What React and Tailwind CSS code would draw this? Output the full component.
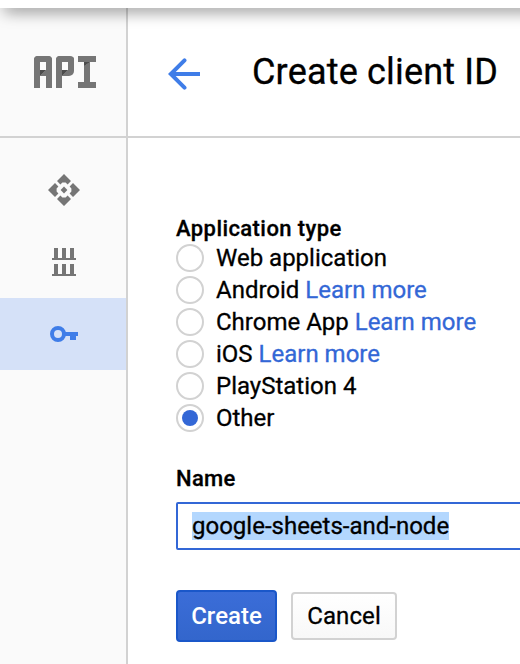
const TYPES = [
  { label: 'Web application' },
  { label: 'Android', link: true },
  { label: 'Chrome App', link: true },
  { label: 'iOS', link: true },
  { label: 'PlayStation 4' },
  { label: 'Other', checked: true },
];

function ApiLogo() {
  return (
    <div role="img" aria-label="API" className="flex h-8 w-[62px] gap-1">
      <div className="h-8 w-[18px] rounded-t-[4px] border-x-[6px] border-t-[6px] border-[#757575]">
        <div className="mt-2 h-1.5 bg-[linear-gradient(135deg,#4c4c4c_45%,#757575_50%)]" />
      </div>
      <div className="h-8 w-[18px]">
        <div className="h-5 w-[18px] rounded-t-[4px] rounded-br-[5px] border-x-[6px] border-t-[6px] border-[#757575]">
          <div className="mt-2 h-1.5 bg-[linear-gradient(135deg,#4c4c4c_45%,#757575_50%)]" />
        </div>
        <div className="h-3 w-1.5 bg-[#757575]" />
      </div>
      <div className="flex h-8 w-[18px] flex-col items-center border-y-[6px] border-[#757575]">
        <div className="w-1.5 grow bg-[#757575]">
          <div className="h-1 bg-[linear-gradient(to_bottom_right,#4c4c4c_45%,#757575_50%)]" />
        </div>
      </div>
    </div>
  );
}

function Sidebar() {
  return (
    <aside className="flex w-32 shrink-0 flex-col border-r-2 border-[#d2d2d2] bg-[#fafafa]">
      <div className="flex h-[130px] shrink-0 items-center border-b-2 border-[#d2d2d2] pl-[34px]">
        <ApiLogo />
      </div>
      <nav className="flex flex-col pt-4">
        <a className="flex h-[72px] items-center justify-center pl-0.5">
          <svg width="32" height="32" viewBox="-16 -16 32 32" fill="#757575">
            <path d="M0-3.4L3.4 0L0 3.4L-3.4 0Z" />
            {[0, 90, 180, 270].map((a) => (
              <path key={a} transform={`rotate(${a})`} d="M0-16L7-9L3.6-5.6L1.6-7.4H-1.6L-3.6-5.6L-7-9Z" />
            ))}
          </svg>
        </a>
        <a className="flex h-[72px] items-center justify-center pl-0.5">
          <svg width="24" height="28" viewBox="0 0 24 28" fill="#757575" shapeRendering="crispEdges">
            <path d="M2 0h4v10h4V0h4v10h4V0h4v10h2v2H0v-2h2zM2 16h4v10h4V16h4v10h4V16h4v10h2v2H0v-2h2z" />
          </svg>
        </a>
        <a className="flex h-[72px] items-center justify-center bg-[#d5e1f8] pl-0.5">
          <svg width="28" height="16" viewBox="0 0 28 16">
            <circle cx="8" cy="8" r="6" fill="none" stroke="#3f7de8" strokeWidth="4" />
            <path d="M14 6h14v4h-2v4h-6v-4h-6z" fill="#3f7de8" />
          </svg>
        </a>
      </nav>
    </aside>
  );
}

export default function App() {
  return (
    <div className="flex h-[664px] w-[520px] flex-col overflow-hidden bg-white font-['Roboto',sans-serif] text-black">
      <div className="relative h-2 shrink-0">
        <div className="absolute top-0 left-[4px] h-2 w-[540px] shadow-[0_2px_16px_rgba(0,0,0,0.65)]" />
        <div className="absolute inset-0 bg-white" />
      </div>
      <div className="flex min-h-0 grow">
        <Sidebar />
        <main className="flex min-w-0 grow flex-col">
          <header className="flex h-[130px] shrink-0 items-center border-b-2 border-[#d2d2d2] pl-10">
            <svg width="32" height="32" viewBox="0 0 32 32" fill="none" stroke="#3f7de8" strokeWidth="4" className="mt-1">
              <path d="M32 16H3" />
              <path d="M16.5 2.3L2.8 16L16.5 29.7" strokeLinecap="round" />
            </svg>
            <h1 className="ml-[52px] text-[36px] leading-[42px] tracking-[0.18px] whitespace-nowrap [-webkit-text-stroke:0.3px]">Create client ID</h1>
          </header>
          <form className="flex flex-col pl-12">
            <h2 className="mt-[77px] text-[22px] leading-7 font-medium tracking-[0.42px] [-webkit-text-stroke:0.3px]">Application type</h2>
            <div className="mt-px flex flex-col gap-1">
              {TYPES.map((t) => (
                <div key={t.label} className="flex h-7 items-center gap-3">
                  <span className="flex size-7 items-center justify-center rounded-full border-2 border-[#d2d2d2] bg-white">
                    {t.checked && <span className="size-4 rounded-full bg-[#3367d6]" />}
                  </span>
                  <span className="text-[24px] leading-7 whitespace-nowrap [-webkit-text-stroke:0.3px]">
                    {t.label}
                    {t.link && <span className="text-[#3367d6]"> Learn more</span>}
                  </span>
                </div>
              ))}
            </div>
            <h2 className="mt-[33px] text-[22px] leading-7 font-medium tracking-[0.3px] [-webkit-text-stroke:0.3px]">Name</h2>
            <div className="mt-[9px] flex h-12 w-[400px] items-center rounded-[2px] border-2 border-[#3367d6] pl-[14px]">
              <span className="h-7 bg-[#b3d7fe] text-[24px] leading-7 whitespace-nowrap [-webkit-text-stroke:0.3px]">google-sheets-and-node</span>
            </div>
            <div className="mt-10 flex items-center gap-[14px]">
              <button type="button" className="h-[52px] w-[101px] rounded-[4px] border-2 border-[#1a57c9] bg-linear-to-b from-[#3b6dd8] to-[#3366cc] text-[24px] font-medium text-white">
                Create
              </button>
              <button type="button" className="h-12 w-[106px] rounded-[4px] border-2 border-[#d2d2d2] bg-linear-to-b from-white to-[#f8f8f8] text-[24px] tracking-[0.1px] [-webkit-text-stroke:0.3px]">
                Cancel
              </button>
            </div>
          </form>
        </main>
      </div>
    </div>
  );
}
